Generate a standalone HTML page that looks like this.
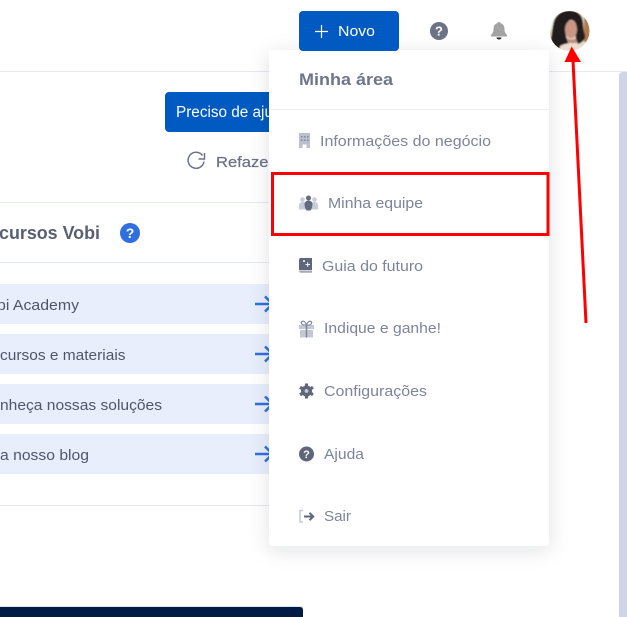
<!DOCTYPE html>
<html lang="pt-BR">
<head>
<meta charset="utf-8">
<title>Minha área</title>
<style>
html,body{margin:0;padding:0;width:627px;height:617px;overflow:hidden;background:#fff}
svg{display:block;font-family:"Liberation Sans",sans-serif}
</style>
</head>
<body>
<svg width="627" height="617" viewBox="0 0 627 617" xmlns="http://www.w3.org/2000/svg">
<defs>
<filter id="sh" x="-20%" y="-20%" width="140%" height="140%"><feDropShadow dx="0" dy="4" stdDeviation="10" flood-color="#20283c" flood-opacity=".12"/></filter>
<filter id="bl"><feGaussianBlur stdDeviation=".7"/></filter>
<clipPath id="av"><circle cx="569.500" cy="31" r="20"/></clipPath>
</defs>
<rect width="627" height="617" fill="#fff"/>
<rect x="0" y="71" width="627" height="1" fill="#e6e8f3"/>
<path d="M627 72H623Q619 72 619 76V617H627Z" fill="#cfd4e8"/>

<!-- header -->
<circle cx="439" cy="31" r="9" fill="#6d7387"/>
<text x="439" y="35.500" font-size="13" font-weight="700" fill="#fff" text-anchor="middle">?</text>
<path d="M499 22c1 0 1.500.6 1.600 1.300 3 .7 3.900 3.200 3.900 6 0 2.800 1.100 4.300 2.500 5.700.5.500.2 1.500-.6 1.500h-14.800c-.8 0-1.100-1-.6-1.500 1.400-1.400 2.500-2.900 2.500-5.700 0-2.800.9-5.300 3.900-6 .1-.7.600-1.300 1.600-1.300z" fill="#a3a3a3"/>
<path d="M496.500 37.500h5a2.500 2 0 0 1-5 0z" fill="#222"/>

<!-- avatar -->
<g clip-path="url(#av)">
<g filter="url(#bl)">
<rect x="548" y="9" width="44" height="44" fill="#e6dccd"/>
<rect x="584" y="18" width="8" height="24" fill="#b47a48"/>
<path d="M548 9h12l-6 18-6 6z" fill="#f3f3f1"/>
<path d="M564 11c8-2 15 0 18 7 2 6 1 13 3 17 1 4-3 8-7 9-3-6-3-11-2-15 1-6-2-9-5-9-4 0-4 6-5 10-1 5 1 9 2 12 1 4-4 7-9 7-6 0-9-4-8-11 1-5 1-8 2-13 1-7 5-12 11-14z" fill="#231c1a"/>
<ellipse cx="571" cy="29.500" rx="6" ry="9" fill="#c99681"/>
<path d="M567 38c2 2 7 2 9 0l1 5h-9z" fill="#c08c78"/>
<path d="M560 46c5-3 13-4 20-1l2 8h-22z" fill="#eddccf"/>
</g>
</g>

<!-- left content -->
<rect x="165" y="92" width="130" height="40" rx="4" fill="#005ac1"/>
<text x="176" y="117" font-size="15.500" fill="#fff" textLength="114" lengthAdjust="spacingAndGlyphs">Preciso de ajuda</text>
<path d="M202.500 155.500a8 8 0 1 0 1.500 6" stroke="#6d7387" stroke-width="1.500" fill="none"/>
<path d="M204.500 153v6h-6" stroke="#6d7387" stroke-width="1.500" fill="none"/>
<text x="216" y="167" font-size="15" fill="#6d7387" stroke="#6d7387" stroke-width=".25" textLength="58" lengthAdjust="spacingAndGlyphs">Refazer</text>
<rect x="0" y="202" width="290" height="1" fill="#e5e8f5"/>
<text x="-1" y="239" font-size="18" font-weight="700" fill="#596072" textLength="101" lengthAdjust="spacingAndGlyphs">cursos Vobi</text>
<circle cx="130" cy="233" r="10" fill="#2f6fdf"/>
<text x="130" y="238" font-size="14" font-weight="700" fill="#fff" text-anchor="middle">?</text>
<rect x="0" y="262" width="290" height="1" fill="#e5e8f5"/>

<rect x="0" y="284" width="290" height="40" fill="#e8eefc"/>
<rect x="0" y="334" width="290" height="40" fill="#e8eefc"/>
<rect x="0" y="384" width="290" height="40" fill="#e8eefc"/>
<rect x="0" y="434" width="290" height="40" fill="#e8eefc"/>
<g font-size="15" fill="#4f5668">
<text x="-3" y="310" textLength="82" lengthAdjust="spacingAndGlyphs">bi Academy</text>
<text x="0" y="360" textLength="125.500" lengthAdjust="spacingAndGlyphs">cursos e materiais</text>
<text x="0" y="410" textLength="162" lengthAdjust="spacingAndGlyphs">nheça nossas soluções</text>
<text x="0" y="460" textLength="89" lengthAdjust="spacingAndGlyphs">a nosso blog</text>
</g>
<g stroke="#2f6fdf" stroke-width="2.500" fill="none">
<path d="M255 304H275M265 296.500l7.500 7.500-7.500 7.500"/>
<path d="M255 354H275M265 346.500l7.500 7.500-7.500 7.500"/>
<path d="M255 404H275M265 396.500l7.500 7.500-7.500 7.500"/>
<path d="M255 454H275M265 446.500l7.500 7.500-7.500 7.500"/>
</g>
<rect x="0" y="505" width="290" height="1" fill="#e6e6ee"/>
<rect x="0" y="606" width="303" height="1" fill="#dfe3ee"/>
<path d="M0 607H300Q303 607 303 610V617H0Z" fill="#001b44"/>

<!-- dropdown -->
<path d="M269 50H549V542Q549 546 545 546H273Q269 546 269 542Z" fill="#fff" filter="url(#sh)"/>
<rect x="299" y="11" width="100" height="40" rx="4" fill="#005ac1"/>
<path d="M321.500 25V38M315 31.500H328" stroke="#fff" stroke-width="1.200" fill="none"/>
<text x="338" y="36" font-size="15" fill="#fff" textLength="37" lengthAdjust="spacingAndGlyphs">Novo</text>
<text x="299" y="85" font-size="17" font-weight="700" fill="#6f758b" textLength="94" lengthAdjust="spacingAndGlyphs">Minha área</text>
<rect x="269" y="109" width="280" height="1" fill="#eceef4"/>

<g font-size="15" fill="#7d849b">
<text x="320" y="146" textLength="171" lengthAdjust="spacingAndGlyphs">Informações do negócio</text>
<text x="328" y="208" textLength="95" lengthAdjust="spacingAndGlyphs">Minha equipe</text>
<text x="322" y="271" textLength="101" lengthAdjust="spacingAndGlyphs">Guia do futuro</text>
<text x="324" y="333" textLength="117" lengthAdjust="spacingAndGlyphs">Indique e ganhe!</text>
<text x="324" y="396" textLength="103" lengthAdjust="spacingAndGlyphs">Configurações</text>
<text x="324" y="459" textLength="40" lengthAdjust="spacingAndGlyphs">Ajuda</text>
<text x="324" y="521" textLength="27" lengthAdjust="spacingAndGlyphs">Sair</text>
</g>

<!-- building -->
<path d="M299 133H310V148H306.500V144.500H302.500V148H299Z" fill="#bcc0cd"/>
<path d="M301 136h1.500v1.500H301zM304 136h1.500v1.500H304zM307 136h1.500v1.500H307zM301 139.500h1.500V141H301zM304 139.500h1.500V141H304zM307 139.500h1.500V141H307z" fill="#7d849b"/>
<!-- team -->
<g fill="#c8ccd7">
<circle cx="302.500" cy="199.500" r="2.300"/><path d="M299 209.500c-.5-4 0-7.500 3.500-7.500s4.500 3.500 4 7.500z"/>
<circle cx="314.500" cy="199.500" r="2.300"/><path d="M310.500 209.500c-.5-4 .5-7.500 4-7.500s4 3.500 3.500 7.500z"/>
</g>
<g fill="#646b80"><circle cx="308.500" cy="198" r="2.500"/><path d="M304.500 204c0-2 1.800-3.500 4-3.500s4 1.500 4 3.500c0 3-1 5-2 6.500h-4c-1-1.500-2-3.500-2-6.500z"/></g>
<!-- book -->
<path d="M301 258H312V270H299V260A2 2 0 0 1 301 258Z" fill="#5f6679"/>
<path d="M299 270.500H312V272.800H301A2 2 0 0 1 299 270.500Z" fill="#a4a9b7"/>
<path d="M303 261h2M304 260v2M305.500 264.500h4.500M307.700 262.200v4.600" stroke="#fff" stroke-width="1" fill="none"/>
<!-- gift -->
<path d="M299 325H314V329H299ZM300 330H313V337.500H300Z" fill="#c4c8d4"/>
<path d="M306.500 325V337.500" stroke="#7d849b" stroke-width="1.500"/>
<path d="M306.500 325c-1-3-3-4.500-4.500-3.500s-.5 3 1.500 3.500zM306.500 325c1-3 3-4.500 4.500-3.500s.5 3-1.500 3.500z" stroke="#7d849b" stroke-width="1.100" fill="none"/>
<!-- gear -->
<circle cx="306.500" cy="391" r="5.500" fill="#5f6679"/>
<path d="M306.500 383.500V386M306.500 396V398.500M300 387.200l2.200 1.300M311 393.500l2 1.200M300 394.800l2.200-1.300M311 388.500l2-1.200" stroke="#5f6679" stroke-width="3.200"/>
<circle cx="306.500" cy="391" r="1.900" fill="#c4c8d4"/>
<!-- help -->
<circle cx="306.500" cy="454" r="7.500" fill="#5f6679"/>
<text x="306.500" y="458" font-size="11" font-weight="700" fill="#fff" text-anchor="middle">?</text>
<!-- exit -->
<path d="M303 510.500H300V522H303" stroke="#c4c8d4" stroke-width="1.500" fill="none"/>
<path d="M304 516.500H313M309.500 512.800l3.700 3.700-3.700 3.700" stroke="#5f6679" stroke-width="2" fill="none"/>

<!-- annotations -->
<rect x="272.500" y="173.500" width="275.500" height="61" fill="none" stroke="#f00" stroke-width="3"/>
<path d="M573 61L586 323" stroke="#f00" stroke-width="3" fill="none"/>
<path d="M571.700 46.500L581 62H564.500Z" fill="#f00"/>
</svg>
</body>
</html>
